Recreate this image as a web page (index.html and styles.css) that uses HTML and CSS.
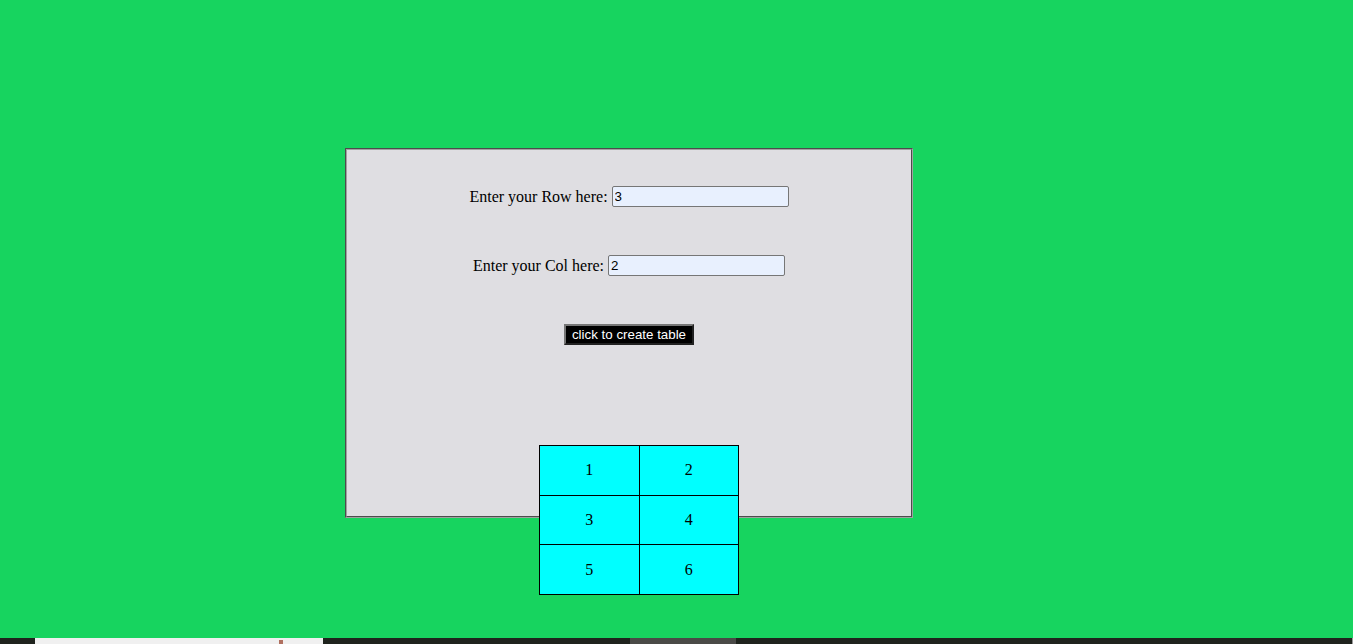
FILE: index.html
```html
<!DOCTYPE html>
<html>
<head>
<meta charset="utf-8">
<link rel="stylesheet" href="styles.css">
</head>
<body>
<div class="page">
  <main class="stage">
    <div class="box">
      <div class="field"><label>Enter your Row here: </label><input class="inp" type="text" value="3"></div>
      <div class="field"><label>Enter your Col here: </label><input class="inp" type="text" value="2"></div>
      <div class="field"><button class="btn">click to create table</button></div>
      <table class="grid">
        <tr><td>1</td><td>2</td></tr>
        <tr><td>3</td><td>4</td></tr>
        <tr><td>5</td><td>6</td></tr>
      </table>
    </div>
  </main>
  <footer class="taskbar">
    <div class="tb-gap1"></div>
    <div class="tb-white"><span class="tb-icon"></span></div>
    <div class="tb-gap2"></div>
    <div class="tb-gray"></div>
    <div class="tb-rest"></div>
    <div class="tb-edge"></div>
  </footer>
</div>
</body>
</html>
```

FILE: styles.css
```css
html, body {
  margin: 0;
  padding: 0;
}
body {
  background: #17d45f;
  font-family: "Liberation Serif", "Times New Roman", serif;
  font-size: 16px;
  color: #000;
}
.page {
  height: 644px;
  display: flex;
  flex-direction: column;
  overflow: hidden;
}
.stage {
  flex: 1;
  padding-top: 148px;
  padding-left: 345px;
}
.box {
  width: 564px;
  height: 330px;
  background: #dfdee2;
  border: 2px groove #a0a0a0;
  padding-top: 36px;
  box-sizing: content-box;
}
.field {
  display: flex;
  justify-content: center;
  align-items: center;
  height: 21px;
  margin-bottom: 48px;
  line-height: 21px;
}
.field label {
  white-space: pre;
}
.inp {
  width: 177px;
  height: 21px;
  box-sizing: border-box;
  margin: 0;
  padding: 1px 2px;
  border: 1px solid #767676;
  border-radius: 2px;
  background: #e8f0fe;
  font-family: "Liberation Sans", Arial, sans-serif;
  font-size: 13.33px;
  color: #000;
}
.btn {
  width: 130px;
  height: 21px;
  box-sizing: border-box;
  margin: 0;
  padding: 0;
  white-space: nowrap;
  background: #000;
  color: #fff;
  border: 2px outset #767676;
  font-family: "Liberation Sans", Arial, sans-serif;
  font-size: 13.33px;
  line-height: 15px;
}
.grid {
  border-collapse: collapse;
  width: 200px;
  height: 150px;
  margin: 100px 0 0 192px;
}
.grid td {
  width: 50%;
  padding: 0;
  border: 1px solid #000;
  background: #00ffff;
  text-align: center;
  vertical-align: middle;
}
.taskbar {
  height: 6px;
  display: flex;
  background: #1f231d;
}
.tb-gap1 { width: 35px; }
.tb-white {
  width: 288px;
  background: #f0f0f0;
  display: flex;
  justify-content: flex-end;
  align-items: flex-end;
}
.tb-icon {
  width: 4px;
  height: 4px;
  margin-right: 40px;
  background: #b07060;
}
.tb-gap2 { width: 307px; }
.tb-gray { width: 106px; background: #4a4a47; }
.tb-rest { flex: 1; }
.tb-edge { width: 1px; background: #9a9a9a; }
```
